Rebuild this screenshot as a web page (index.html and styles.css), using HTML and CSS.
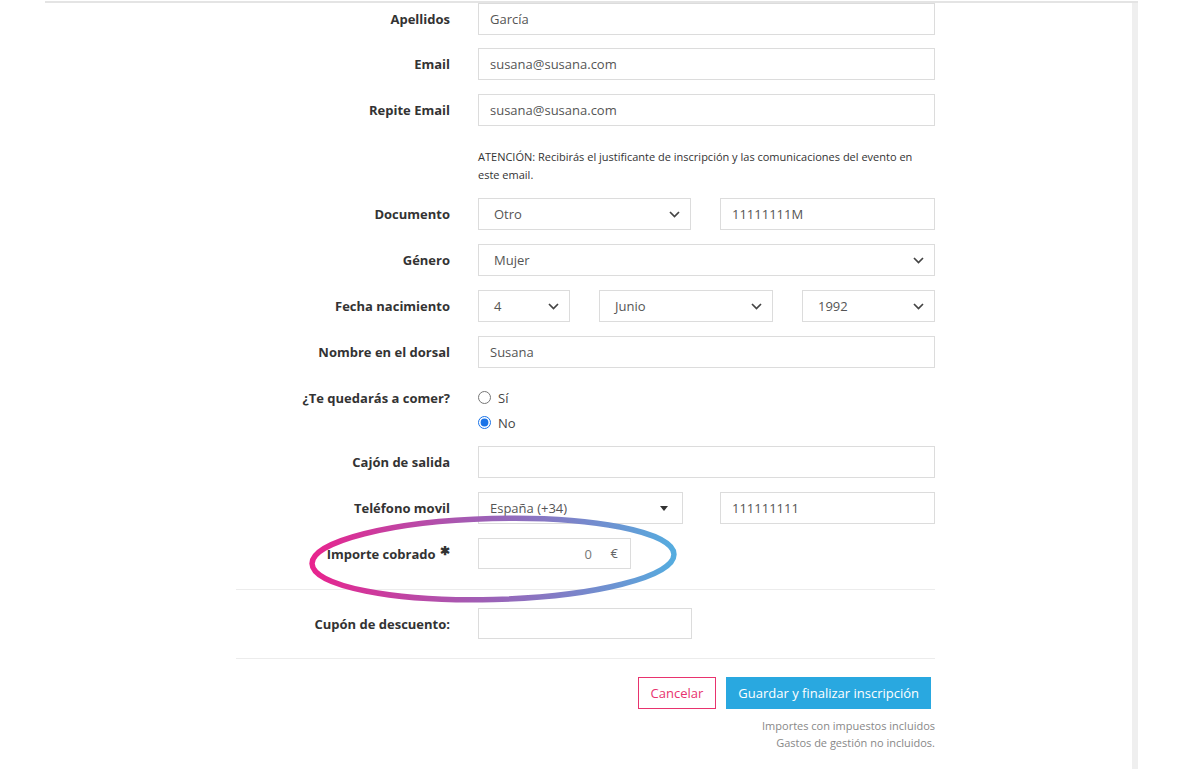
FILE: index.html
```html
<!DOCTYPE html>
<html lang="es">
<head>
    <meta charset="UTF-8">
    <meta name="viewport" content="width=device-width, initial-scale=1.0">
    <title>Inscripción</title>
    <link rel="stylesheet" href="styles.css">
</head>
<body>
    <div class="panel">
        <div class="panel-body">
            <form class="form">
                <div class="row">
                    <label class="label">Apellidos</label>
                    <input class="box" type="text" value="García">
                </div>
                <div class="row">
                    <label class="label">Email</label>
                    <input class="box" type="text" value="susana@susana.com">
                </div>
                <div class="row">
                    <label class="label">Repite Email</label>
                    <input class="box" type="text" value="susana@susana.com">
                </div>
                <div class="row">
                    <span></span>
                    <p class="notice">ATENCIÓN: Recibirás el justificante de inscripción y las comunicaciones del evento en este email.</p>
                </div>
                <div class="row">
                    <label class="label">Documento</label>
                    <div class="split split-doc">
                        <div class="box select"><span>Otro</span>
                            <svg class="chev" width="11" height="7" viewBox="0 0 11 7"><path d="M1 1l4.5 4.5L10 1" fill="none" stroke="#444" stroke-width="1.7"/></svg>
                        </div>
                        <input class="box" type="text" value="11111111M">
                    </div>
                </div>
                <div class="row">
                    <label class="label">Género</label>
                    <div class="box select"><span>Mujer</span>
                        <svg class="chev" width="11" height="7" viewBox="0 0 11 7"><path d="M1 1l4.5 4.5L10 1" fill="none" stroke="#444" stroke-width="1.7"/></svg>
                    </div>
                </div>
                <div class="row">
                    <label class="label">Fecha nacimiento</label>
                    <div class="split split-date">
                        <div class="box select"><span>4</span>
                            <svg class="chev" width="11" height="7" viewBox="0 0 11 7"><path d="M1 1l4.5 4.5L10 1" fill="none" stroke="#444" stroke-width="1.7"/></svg>
                        </div>
                        <div class="box select"><span>Junio</span>
                            <svg class="chev" width="11" height="7" viewBox="0 0 11 7"><path d="M1 1l4.5 4.5L10 1" fill="none" stroke="#444" stroke-width="1.7"/></svg>
                        </div>
                        <div class="box select"><span>1992</span>
                            <svg class="chev" width="11" height="7" viewBox="0 0 11 7"><path d="M1 1l4.5 4.5L10 1" fill="none" stroke="#444" stroke-width="1.7"/></svg>
                        </div>
                    </div>
                </div>
                <div class="row">
                    <label class="label">Nombre en el dorsal</label>
                    <input class="box" type="text" value="Susana">
                </div>
                <div class="row row-radio">
                    <label class="label">¿Te quedarás a comer?</label>
                    <div class="radios">
                        <label class="radio"><input type="radio" name="comer"> Sí</label>
                        <label class="radio"><input type="radio" name="comer" checked> No</label>
                    </div>
                </div>
                <div class="row">
                    <label class="label">Cajón de salida</label>
                    <input class="box" type="text" value="">
                </div>
                <div class="row">
                    <label class="label">Teléfono movil</label>
                    <div class="split split-phone">
                        <div class="box select select-phone"><span>España (+34)</span>
                            <svg class="caret" width="8" height="5" viewBox="0 0 8 5"><path d="M0 0h8L4 5z" fill="#333"/></svg>
                        </div>
                        <input class="box" type="text" value="111111111">
                    </div>
                </div>
                <div class="row row-amount">
                    <label class="label">Importe cobrado <span class="req">✱</span></label>
                    <div class="amount">
                        <input class="box amount-input" type="text" value="0">
                        <span class="euro">€</span>
                        <svg class="highlight" width="380" height="96" viewBox="0 0 380 96">
                            <defs>
                                <linearGradient id="ring" x1="0" y1="0" x2="1" y2="0">
                                    <stop offset="0" stop-color="#e8248e"/>
                                    <stop offset="0.5" stop-color="#9a63b8"/>
                                    <stop offset="1" stop-color="#55acdf"/>
                                </linearGradient>
                            </defs>
                            <ellipse cx="190" cy="48" rx="181" ry="40.5" fill="none" stroke="url(#ring)" stroke-width="5.5" transform="rotate(-1.5 190 48)"/>
                        </svg>
                    </div>
                </div>

                <hr class="sep">

                <div class="row row-coupon">
                    <label class="label">Cupón de descuento:</label>
                    <input class="box coupon" type="text" value="">
                </div>

                <hr class="sep">

                <div class="actions">
                    <button type="button" class="btn btn-cancel">Cancelar</button>
                    <button type="button" class="btn btn-save">Guardar y finalizar inscripción</button>
                </div>
                <p class="fine">Importes con impuestos incluidos<br>Gastos de gestión no incluidos.</p>
            </form>
        </div>
        <div class="panel-bar"></div>
    </div>
</body>
</html>
```

FILE: styles.css
```css
body {
    margin: 0;
    font-family: "Open Sans", Arial, sans-serif;
    color: #333;
    background-color: #fff;
}
.panel {
    margin: 1px 0 0 45px;
    width: 1093px;
    height: 766px;
    border-top: 2px solid #e4e4e4;
    display: flex;
}
.panel-body {
    flex: 1;
}
.panel-bar {
    width: 6px;
    background-color: #efefef;
}
.form {
    margin: 0 0 0 191px;
    width: 699px;
}
.row {
    display: grid;
    grid-template-columns: 214px 457px;
    column-gap: 28px;
    align-items: start;
    margin-bottom: 14px;
}
.row:first-child {
    margin-bottom: 13px;
}
.label {
    text-align: right;
    font-weight: 700;
    font-size: 13px;
    line-height: 32px;
    color: #333;
    white-space: nowrap;
}
.box {
    box-sizing: border-box;
    height: 32px;
    width: 100%;
    margin: 0;
    border: 1px solid #dcdcdc;
    padding: 0 11px;
    font-family: "Open Sans", Arial, sans-serif;
    font-size: 13px;
    color: #555;
    background-color: #fff;
    outline: none;
}
.select {
    display: flex;
    align-items: center;
    justify-content: space-between;
    padding: 0 10px 0 15px;
}
.select-phone {
    padding: 0 14px 0 11px;
}
.split {
    display: grid;
    column-gap: 29px;
}
.split-doc {
    grid-template-columns: 213px 1fr;
}
.split-date {
    grid-template-columns: 92px 174px 1fr;
}
.split-phone {
    grid-template-columns: 205px 1fr;
    column-gap: 37px;
}
.notice {
    margin: 0;
    padding-top: 8px;
    max-width: 445px;
    font-size: 11px;
    line-height: 18px;
    color: #333;
}
.row-radio {
    margin-bottom: 11px;
}
.radios {
    padding-top: 3px;
}
.radio {
    display: flex;
    align-items: center;
    height: 25px;
    font-size: 13px;
    color: #444;
}
.radio input {
    margin: 0 7px 0 0;
    width: 13px;
    height: 13px;
    accent-color: #1a73e8;
}
.row-amount {
    margin-bottom: 0;
}
.row-amount .box {
    height: 31px;
}
.req {
    font-size: 12px;
    position: relative;
    top: -4px;
    margin-left: 1px;
}
.amount {
    position: relative;
    width: 153px;
}
.amount-input {
    text-align: right;
    padding-right: 38px;
    color: #777;
}
.euro {
    position: absolute;
    right: 13px;
    top: 0;
    line-height: 31px;
    font-size: 13px;
    color: #666;
}
.highlight {
    position: absolute;
    left: -175px;
    top: -27px;
    pointer-events: none;
}
.sep {
    border: 0;
    border-top: 1px solid #ececec;
    margin: 18px 0 18px;
}
.row-coupon {
    margin-bottom: 0;
}
.coupon {
    width: 214px;
    height: 31px;
}
.actions {
    display: flex;
    justify-content: flex-end;
    gap: 10px;
    margin-right: 4px;
}
.btn {
    height: 32px;
    font-family: "Open Sans", Arial, sans-serif;
    font-size: 13px;
    cursor: pointer;
}
.btn-cancel {
    padding: 0 12px;
    border: 1px solid #e8336e;
    background-color: #fff;
    color: #e8336e;
}
.btn-save {
    padding: 0 12px;
    border: none;
    background-color: #29a8e0;
    color: #fff;
}
.fine {
    margin: 8px 0 0;
    text-align: right;
    font-size: 11px;
    line-height: 17px;
    color: #888;
}
```
